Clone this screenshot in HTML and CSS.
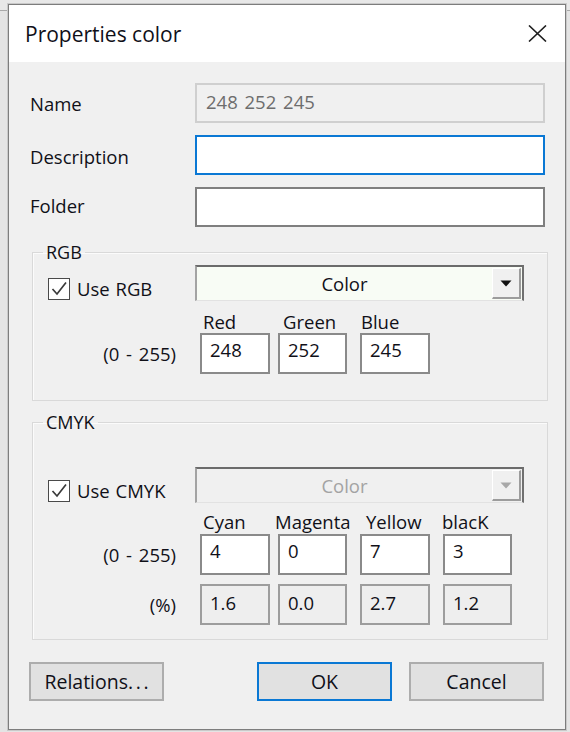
FILE: index.html
```html
<!DOCTYPE html>
<html>
<head>
<meta charset="utf-8">
<title>Properties color</title>
<link rel="stylesheet" href="styles.css">
</head>
<body>
<div class="window">
  <div class="titlebar">
    <span class="title">Properties color</span>
    <svg class="close" width="19" height="17" viewBox="0 0 19 17"><path d="M1 0.5 L18 16.5 M18 0.5 L1 16.5" stroke="#1e1e1e" stroke-width="1.6" fill="none"/></svg>
  </div>
  <div class="content">
    <div class="frow"><span class="flabel">Name</span><div class="field ro">248 252 245</div></div>
    <div class="frow"><span class="flabel lb-desc">Description</span><div class="field focus"></div></div>
    <div class="frow"><span class="flabel lb-folder">Folder</span><div class="field"></div></div>

    <fieldset class="group rgb">
      <legend>RGB</legend>
      <div class="userow">
        <div class="check"><span class="box"><svg width="20" height="20" viewBox="0 0 20 20"><path d="M3.5 10 L8 15 L17 3.5" stroke="#3a3a3a" stroke-width="1.7" fill="none"/></svg></span>Use RGB</div>
        <div class="combo tinted"><span class="combo-text">Color</span><span class="drop"><svg width="12" height="7" viewBox="0 0 12 7"><path d="M0.5 0.5 H11.5 L6 6.5 Z" fill="#111"/></svg></span></div>
      </div>
      <div class="hdr">
        <span class="sp"></span><span class="h w80">Red</span><span class="h w78">Green</span><span class="h">Blue</span>
      </div>
      <div class="vrow">
        <span class="rlabel">(0 - 255)</span>
        <div class="num n1">248</div><div class="num n2">252</div><div class="num n3">245</div>
      </div>
    </fieldset>

    <fieldset class="group cmyk">
      <legend>CMYK</legend>
      <div class="userow">
        <div class="check"><span class="box"><svg width="20" height="20" viewBox="0 0 20 20"><path d="M3.5 10 L8 15 L17 3.5" stroke="#3a3a3a" stroke-width="1.7" fill="none"/></svg></span>Use CMYK</div>
        <div class="combo disabled"><span class="combo-text">Color</span><span class="drop"><svg width="12" height="7" viewBox="0 0 12 7"><path d="M0.5 0.5 H11.5 L6 6.5 Z" fill="#a8a8a8"/></svg></span></div>
      </div>
      <div class="hdr">
        <span class="sp"></span><span class="h w72">Cyan</span><span class="h w91">Magenta</span><span class="h w76">Yellow</span><span class="h">blacK</span>
      </div>
      <div class="vrow">
        <span class="rlabel">(0 - 255)</span>
        <div class="num n1">4</div><div class="num n2">0</div><div class="num n3">7</div><div class="num n4">3</div>
      </div>
      <div class="vrow pct">
        <span class="rlabel">(%)</span>
        <div class="num ro n1">1.6</div><div class="num ro n2">0.0</div><div class="num ro n3">2.7</div><div class="num ro n4">1.2</div>
      </div>
    </fieldset>

    <div class="buttons">
      <div class="btn rel">Relations<span class="dots">...</span></div>
      <div class="spacer"></div>
      <div class="btn default">OK</div>
      <div class="btn cancel">Cancel</div>
    </div>
  </div>
</div>
</body>
</html>
```

FILE: styles.css
```css
html, body {
  margin: 0;
  padding: 0;
}
body {
  width: 570px;
  height: 732px;
  overflow: hidden;
  background: linear-gradient(#e8e8e8 0, #e8e8e8 10px, #a9a9a9 10px, #a9a9a9 11px, #e4e4e4 11px);
  font-family: "Open Sans", "Noto Sans", sans-serif;
  font-size: 18.5px;
  word-spacing: 1px;
  color: #101018;
}
.window {
  margin: 4px 0 0 8px;
  width: 556px;
  height: 724px;
  border: 1px solid #7d7d7d;
  background: #f0f0f0;
  box-shadow: 0 0 0 1px #c9c9c9;
  display: flex;
  flex-direction: column;
}
.titlebar {
  height: 57px;
  background: #ffffff;
  display: flex;
  align-items: center;
  padding-left: 16px;
  flex: none;
}
.title {
  font-size: 21px;
  word-spacing: 0;
  flex: 1;
}
.close {
  margin-right: 18px;
}
.content {
  padding: 21px 17px 0 21px;
  display: flex;
  flex-direction: column;
}
.frow {
  display: flex;
  align-items: center;
  height: 40px;
  margin-right: 3px;
}
.frow + .frow {
  margin-top: 12px;
}
.flabel {
  width: 165px;
}
.lb-desc {
  margin-top: 3px;
}
.lb-folder {
  margin-top: -4px;
}
.field {
  box-sizing: border-box;
  flex: 1;
  height: 100%;
  background: #fff;
  border: 2px solid #7f7f7f;
  padding: 4px 9px;
  line-height: 26px;
  word-spacing: 2px;
}
.field.ro {
  background: #f0f0f0;
  border-color: #cfcfcf;
  color: #6d6d6d;
}
.field.focus {
  border-color: #0a78d4;
}
.group {
  margin: 15px 0 0 2px;
  padding: 0 0 26px 15px;
  border: 1px solid #d9d9d9;
  box-shadow: inset 1px 1px 0 #fbfbfb;
  min-width: 0;
}
.group legend {
  margin-left: -5px;
  padding: 0 3px;
  line-height: 20px;
  font-size: 18px;
}
.group.cmyk {
  margin-top: 11px;
  padding-bottom: 14px;
}
.userow {
  display: flex;
  align-items: flex-end;
  margin-top: 3px;
  height: 36px;
}
.cmyk .userow {
  margin-top: 35px;
}
.check {
  width: 147px;
  display: flex;
  align-items: center;
  margin-bottom: 1px;
  line-height: 22px;
}
.box {
  box-sizing: border-box;
  width: 22px;
  height: 22px;
  border: 1.5px solid #4a4a4a;
  background: #fff;
  margin-right: 7px;
  display: flex;
  align-items: center;
  justify-content: center;
}
.combo {
  box-sizing: border-box;
  width: 329px;
  height: 36px;
  display: flex;
  align-items: stretch;
  border-style: solid;
  border-width: 2px 2px 1px 2px;
  border-color: #6b6b6b #707070 #e2e2e2 #a3a3a3;
  padding: 1px 1px 1px 0;
}
.combo.tinted {
  background: #f8fcf5;
}
.combo.disabled {
  background: #f0f0f0;
  color: #a3a3a3;
}
.combo-text {
  flex: 1;
  text-align: center;
  line-height: 30px;
  padding-top: 1px;
}
.drop {
  box-sizing: border-box;
  width: 29px;
  background: #f0f0f0;
  border-style: solid;
  border-width: 1px 2px 2px 1px;
  border-color: #ffffff #9c9c9c #9c9c9c #ffffff;
  display: flex;
  align-items: center;
  justify-content: center;
}
.hdr {
  display: flex;
  margin-top: 11px;
  line-height: 20px;
  height: 20px;
}
.cmyk .hdr {
  margin-top: 9px;
}
.sp {
  width: 155px;
}
.w80 { width: 80px; }
.w78 { width: 78px; }
.w72 { width: 72px; }
.w91 { width: 91px; }
.w76 { width: 76px; }
.vrow {
  display: flex;
  align-items: center;
  margin-top: 1px;
  height: 41px;
}
.cmyk .vrow {
  margin-top: 2px;
}
.cmyk .vrow.pct {
  margin-top: 9px;
}
.rlabel {
  box-sizing: border-box;
  width: 152px;
  padding-right: 24px;
  text-align: right;
  word-spacing: 2px;
}
.num {
  box-sizing: border-box;
  height: 41px;
  background: #fff;
  border: 2px solid #8a8a8a;
  padding: 2px 8px;
  line-height: 26px;
}
.num.ro {
  background: #eeeeee;
  border-color: #9d9d9d;
  padding-top: 4px;
}
.n1 { width: 70px; }
.n2 { width: 69px; margin-left: 8px; }
.n3 { width: 70px; margin-left: 13px; }
.n4 { width: 69px; margin-left: 13px; }
.buttons {
  display: flex;
  margin: 22px 4px 0 -1px;
}
.spacer {
  flex: 1;
}
.btn {
  box-sizing: border-box;
  width: 135px;
  height: 39px;
  background: #e1e1e1;
  border: 2px solid #adadad;
  display: flex;
  align-items: center;
  justify-content: center;
  font-size: 19.5px;
}
.dots {
  letter-spacing: 2.6px;
  margin-right: -2.6px;
}
.btn.default {
  border-color: #0a78d4;
}
.btn.cancel {
  margin-left: 17px;
}
```
